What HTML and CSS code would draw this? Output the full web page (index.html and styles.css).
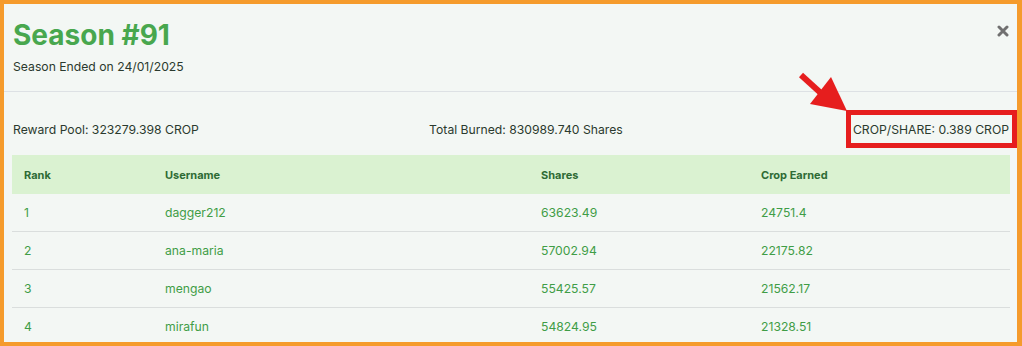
FILE: index.html
```html
<!DOCTYPE html>
<html>
<head>
<meta charset="utf-8">
<link rel="stylesheet" href="styles.css">
</head>
<body>
<div class="frame">
  <div class="modal">
    <div class="modal-header">
      <div class="heading">
        <h1 class="title">Season #91</h1>
        <p class="subtitle">Season Ended on 24/01/2025</p>
      </div>
      <svg class="close" width="12" height="12" viewBox="0 0 12 12">
        <path d="M2 2 L10 10 M10 2 L2 10" stroke="#707070" stroke-width="3" stroke-linecap="round"/>
      </svg>
    </div>
    <div class="info">
      <span>Reward Pool: 323279.398 CROP</span>
      <span>Total Burned: 830989.740 Shares</span>
      <span class="highlight">CROP/SHARE: 0.389 CROP
        <span class="redbox"></span>
        <svg class="arrow" width="60" height="50" viewBox="0 0 60 50">
          <line x1="4" y1="4" x2="26" y2="24" stroke="#e61e1e" stroke-width="6"/>
          <polygon points="34,6 13,33 50,40" fill="#e61e1e"/>
        </svg>
      </span>
    </div>
    <table class="ranks">
      <thead>
        <tr><th class="c1">Rank</th><th class="c2">Username</th><th class="c3">Shares</th><th>Crop Earned</th></tr>
      </thead>
      <tbody>
        <tr><td>1</td><td>dagger212</td><td>63623.49</td><td>24751.4</td></tr>
        <tr><td>2</td><td>ana-maria</td><td>57002.94</td><td>22175.82</td></tr>
        <tr><td>3</td><td>mengao</td><td>55425.57</td><td>21562.17</td></tr>
        <tr><td>4</td><td>mirafun</td><td>54824.95</td><td>21328.51</td></tr>
      </tbody>
    </table>
  </div>
</div>
</body>
</html>
```
FILE: styles.css
```css
html, body {
  margin: 0;
  padding: 0;
}
body {
  width: 1022px;
  height: 346px;
  overflow: hidden;
  font-family: Inter, "Noto Sans", sans-serif;
}
.frame {
  box-sizing: border-box;
  width: 1022px;
  height: 346px;
  border: 4px solid #f59b2c;
  border-right-width: 5px;
  background: #f3f7f4;
  overflow: hidden;
}
.modal-header {
  display: flex;
  justify-content: space-between;
  align-items: flex-start;
  padding: 14px 9px 0 9px;
  height: 73px;
  border-bottom: 1px solid #dde1e4;
}
.title {
  margin: 0;
  font-size: 28px;
  font-weight: 700;
  color: #48a74e;
  line-height: 34px;
}
.subtitle {
  margin: 7px 0 0 0;
  font-size: 12.2px;
  color: #2b3a2e;
  line-height: 16px;
}
.close {
  margin-top: 7px;
  margin-right: -1px;
}
.info {
  display: flex;
  justify-content: space-between;
  padding: 0 8px 0 9px;
  margin-top: 30px;
  font-size: 12.2px;
  color: #2b3a2e;
  line-height: 16px;
}
.highlight {
  position: relative;
}
.redbox {
  position: absolute;
  left: -7px;
  top: -12px;
  right: -8px;
  bottom: -10px;
  border: 5px solid #e61e1e;
}
.arrow {
  position: absolute;
  left: -56px;
  top: -51px;
}
.ranks {
  margin: 17px 0 0 8px;
  width: 998px;
  border-collapse: collapse;
  font-size: 12.2px;
}
.ranks th {
  background: #daf2d1;
  color: #2e6b35;
  font-size: 11px;
  font-weight: 700;
  text-align: left;
  height: 39px;
  padding: 0 12px;
}
.ranks td {
  height: 37px;
  padding: 0 12px;
  color: #3f9d46;
  border-bottom: 1px solid #dadedd;
}
.c1 { width: 117px; }
.c2 { width: 352px; }
.c3 { width: 196px; }
```
